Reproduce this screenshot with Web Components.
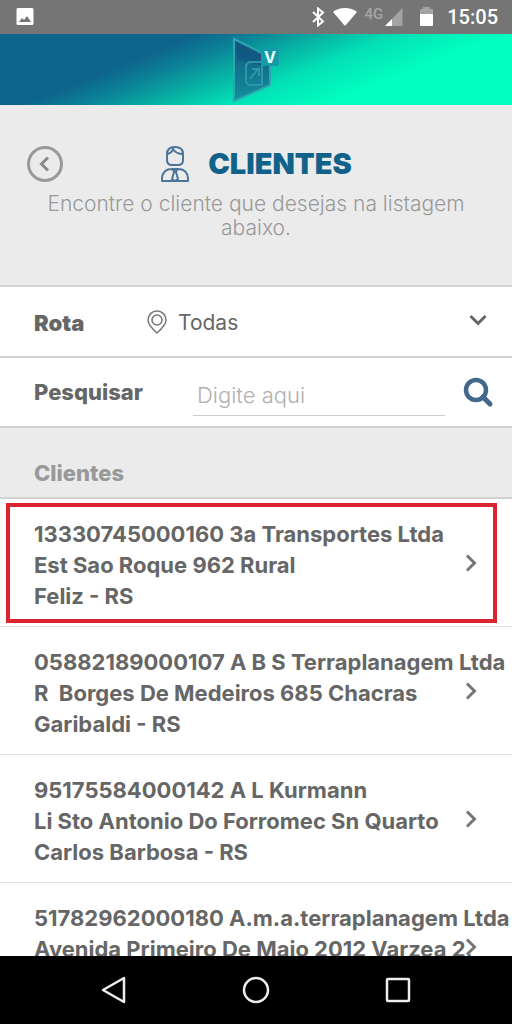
<!DOCTYPE html>
<html lang="pt-BR">
<head>
<meta charset="utf-8">
<meta name="viewport" content="width=device-width, initial-scale=1">
<title>Clientes</title>
<style>
html, body { margin: 0; height: 100%; }
body { font-family: Inter, "Open Sans", sans-serif; color: #666; background: #fff; }
</style>
</head>
<body>
<clients-app></clients-app>
<script>
const define = (name, html) => customElements.define(name, class extends HTMLElement {
  constructor() {
    super();
    const t = document.createElement('template');
    t.innerHTML = html;
    this.attachShadow({ mode: 'open' }).append(t.content.cloneNode(true));
  }
});

define('status-bar', `
<style>
:host { display: flex; align-items: center; height: 34px; flex: none; padding: 0 14px 0 16px; background: #757575; color: #fff; font-family: Roboto, sans-serif; }
svg { display: block; flex: none; }
.photo { margin-right: auto; }
.bt { margin-right: 8px; }
.net { align-self: flex-start; margin: 6px 2px 0 8px; font-size: 15px; line-height: 16px; font-weight: 500; color: #a6a6a6; }
.bat { margin: 0 14px 0 17px; }
time { font-size: 20px; line-height: 34px; font-weight: 500; }
</style>
<svg class="photo" width="18" height="18" viewBox="0 0 18 18"><rect x=".5" width="17" height="17" rx="1.5" fill="#fff"/><path d="M3 14l3-4 2 2 3-4 4 6z" fill="#757575"/></svg>
<svg class="bt" width="14" height="20" viewBox="0 0 14 20"><path d="M2 5l10 9.500L7 18.500V1.500L12 5.500 2 15" fill="none" stroke="#fff" stroke-width="2"/></svg>
<svg width="24" height="20" viewBox="0 0 24 20"><path d="M0 5C6-.5 18-.5 24 5L12 19z" fill="#fff"/></svg>
<span class="net">4G</span>
<svg width="18" height="20" viewBox="0 0 18 20"><path d="M17.500 1v18H0z" fill="#a3a3a3"/><path d="M7 12v7H0z" fill="#fff"/></svg>
<svg class="bat" width="13" height="20" viewBox="0 0 13 20"><path d="M3 0h7v2h3v7H0V2h3z" fill="#a3a3a3"/><path d="M0 7h13v11q0 1-1 1H1q-1 0-1-1z" fill="#fff"/></svg>
<time>15:05</time>`);

define('brand-banner', `
<style>
:host { display: flex; justify-content: center; align-items: center; height: 71px; flex: none;
  background: linear-gradient(158deg, #0d658d 29%, #0b8598 38%, #07b4a4 48%, #03e0b6 58%, #00ffc0 73%); }
svg { display: block; }
text { font: 700 16px Inter, sans-serif; }
</style>
<svg width="48" height="66" viewBox="0 0 48 66" role="img" aria-label="V">
<defs><linearGradient id="g" x1="0" y1="0" x2="0" y2="1"><stop offset="0" stop-color="#11577f"/><stop offset="1" stop-color="#12909c"/></linearGradient></defs>
<path d="M2 2L38 20V48L2 64z" fill="url(#g)" stroke="#2fa5b0" stroke-width="2"/>
<path d="M5 6L36 22V30L5 22z" fill="#115480" opacity=".7"/>
<path d="M14 28l3-3h13v23H17l-3-3zM18 42l8-10m-6 0h7v7" fill="none" stroke="#2f95a8" stroke-width="2"/>
<rect x="29" y="11" width="18" height="18" rx="1" fill="#149ba5"/>
<text x="38" y="26" text-anchor="middle" fill="#e6ffff">V</text>
</svg>`);

define('page-heading', `
<style>
:host { display: grid; grid-template-columns: 38px 1fr 38px; box-sizing: border-box; min-height: 182px; flex: none; align-content: start; padding: 39px 26px 0; background: #ebebeb; border-bottom: 2px solid #d2d2d2; }
button { width: 38px; height: 40px; padding: 0; border: 0; background: none; }
svg { display: block; }
h1 { display: flex; align-items: center; justify-content: center; gap: 18px; margin: 0; height: 40px; font-size: 29px; line-height: 40px; font-weight: 900; color: #11628a; }
p { grid-column: 1 / -1; margin: 8px 0 0; text-align: center; font-size: 21px; line-height: 24px; font-weight: 300; color: #999; }
</style>
<button aria-label="Voltar"><svg width="38" height="40" viewBox="0 0 38 40"><circle cx="19" cy="20" r="16.500" fill="none" stroke="#999" stroke-width="3"/><path d="M22 13.500L15.500 20l6.500 6.500" fill="none" stroke="#888" stroke-width="3"/></svg></button>
<h1><svg width="30" height="38" viewBox="0 0 30 38" fill="none" stroke="#4d7599" stroke-width="2" stroke-linejoin="round"><path d="M7 9C7 4 10 2 15 2s8 2 8 7v6q0 5-5 5h-6q-5 0-5-5zM7 9q5-1 6-5 3 5 10 5M2 36v-3q1-9 10-9h6q9 0 10 9v3zM12 24l3 3 3-3M14 27l-2 7 3 2 3-2-2-7"/></svg><span><slot name="title"></slot></span></h1>
<p><slot></slot></p>`);

define('route-field', `
<style>
:host { display: grid; grid-template-columns: 112px 22px 1fr; align-items: center; box-sizing: border-box; height: 71px; flex: none; padding: 2px 24px 0 34px; border-bottom: 2px solid #d2d2d2; position: relative; }
label { font-size: 22px; line-height: 28px; font-weight: 900; }
svg { display: block; }
select { width: 100%; height: 40px; padding: 0 0 0 10px; appearance: none; border: 0; outline: 0; background: none; color: #666; font: 400 21px Inter, sans-serif; }
.chev { position: absolute; right: 24px; top: 26px; pointer-events: none; }
</style>
<label for="r">Rota</label>
<svg width="22" height="26" viewBox="0 0 22 26" fill="none" stroke="#777" stroke-width="1.500"><path d="M11 23Q2 15 2 10a9 9 0 0 1 18 0q0 5-9 13z"/><circle cx="11" cy="10" r="5"/></svg>
<select id="r"><option>Todas</option></select>
<svg class="chev" width="20" height="14" viewBox="0 0 20 14"><path d="M2.500 3l7.500 7.500L17.500 3" fill="none" stroke="#666" stroke-width="3"/></svg>`);

define('search-field', `
<style>
:host { display: flex; align-items: center; box-sizing: border-box; height: 70px; flex: none; padding: 0 18px 0 34px; border-bottom: 2px solid #d2d2d2; }
label { width: 159px; flex: none; font-size: 22px; line-height: 28px; font-weight: 800; }
input { flex: 1; min-width: 0; height: 42px; box-sizing: border-box; margin: 16px 18px 10px 0; padding: 0 4px; border: 0; border-bottom: 1px solid #ccc; outline: 0; background: none; color: #666; font: 300 22px Inter, sans-serif; }
input::placeholder { color: #b0b0b0; opacity: 1; }
button { padding: 0; border: 0; background: none; }
svg { display: block; }
</style>
<label for="q">Pesquisar</label>
<input id="q" type="text" placeholder="Digite aqui">
<button aria-label="Buscar"><svg width="31" height="32" viewBox="0 0 31 32" fill="none" stroke="#42698b"><circle cx="13" cy="14" r="10" stroke-width="4.500"/><path d="M20 21l7 7" stroke-width="5" stroke-linecap="round"/></svg></button>`);

define('list-title', `
<style>
:host { display: block; box-sizing: border-box; height: 71px; flex: none; padding: 31px 34px 0; background: #ebebeb; border-bottom: 2px solid #d2d2d2; }
h2 { margin: 0; font-size: 22px; line-height: 28px; font-weight: 800; color: #999; }
</style><h2><slot></slot></h2>`);

define('client-row', `
<style>
:host { display: block; position: relative; flex: none; border-bottom: 1px solid #ddd; }
a { display: block; padding: 20px 0 14px 34px; color: #666; text-decoration: none; font-size: 22px; line-height: 31px; font-weight: 700; white-space: pre; }
svg { position: absolute; right: 34px; top: 54px; }
:host([marked])::after { content: ""; position: absolute; inset: 4px 15px 3px 6px; border: 4px solid #dc2430; }
</style>
<a href="#"><slot></slot></a>
<svg width="14" height="20" viewBox="0 0 14 20"><path d="M3 2.500l7.500 7.500L3 17.500" fill="none" stroke="#777" stroke-width="3"/></svg>`);

define('system-nav', `
<style>
:host { display: grid; grid-template-columns: repeat(3, 142px); justify-content: center; height: 68px; flex: none; background: #000; }
button { display: grid; place-items: center; padding: 0; border: 0; background: none; }
</style>
<button aria-label="Voltar"><svg width="28" height="28" viewBox="0 0 28 28"><path d="M24 2v24L3 14z" fill="none" stroke="#eee" stroke-width="2.500" stroke-linejoin="round"/></svg></button>
<button aria-label="Início"><svg width="28" height="28" viewBox="0 0 28 28"><circle cx="14" cy="14" r="12" fill="none" stroke="#eee" stroke-width="2.500"/></svg></button>
<button aria-label="Recentes"><svg width="28" height="28" viewBox="0 0 28 28"><rect x="3" y="3" width="22" height="22" rx="1" fill="none" stroke="#eee" stroke-width="2.500"/></svg></button>`);

define('clients-app', `
<style>
:host { display: flex; flex-direction: column; height: 100vh; }
main { flex: 1; min-height: 0; overflow: hidden; display: flex; flex-direction: column; }
</style>
<status-bar></status-bar>
<main>
<brand-banner></brand-banner>
<page-heading><span slot="title">CLIENTES</span>Encontre o cliente que desejas na listagem abaixo.</page-heading>
<route-field></route-field>
<search-field></search-field>
<list-title>Clientes</list-title>
<client-row marked>13330745000160 3a Transportes Ltda
Est Sao Roque 962 Rural
Feliz - RS</client-row>
<client-row>05882189000107 A B S Terraplanagem Ltda
R  Borges De Medeiros 685 Chacras
Garibaldi - RS</client-row>
<client-row>95175584000142 A L Kurmann
Li Sto Antonio Do Forromec Sn Quarto
Carlos Barbosa - RS</client-row>
<client-row>51782962000180 A.m.a.terraplanagem Ltda
Avenida Primeiro De Maio 2012 Varzea 2,
</client-row>
</main>
<system-nav></system-nav>`);
</script>
</body>
</html>
